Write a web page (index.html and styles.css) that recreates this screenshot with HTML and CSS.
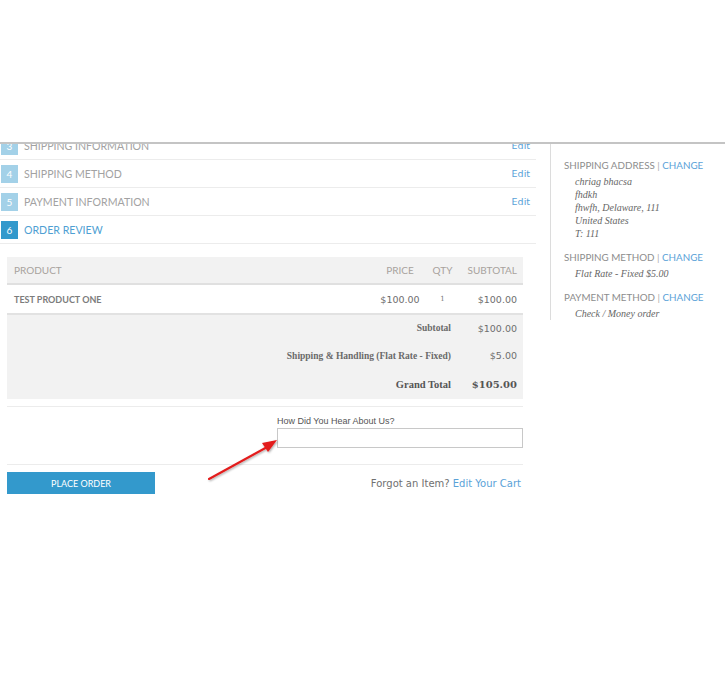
FILE: index.html
```html
<!DOCTYPE html>
<html>
<head>
<meta charset="utf-8">
<link rel="stylesheet" href="styles.css">
</head>
<body>
<div class="top"></div>
<div class="frame">
  <div class="page">
    <div class="main">
      <ol class="steps">
        <li class="step done"><span class="num">3</span><span class="label">Shipping Information</span><a class="edit">Edit</a></li>
        <li class="step done"><span class="num">4</span><span class="label">Shipping Method</span><a class="edit">Edit</a></li>
        <li class="step done"><span class="num">5</span><span class="label">Payment Information</span><a class="edit">Edit</a></li>
        <li class="step active"><span class="num">6</span><span class="label">Order Review</span></li>
      </ol>
      <div class="review">
        <table class="items">
          <thead>
            <tr><th class="c-name">Product</th><th class="c-price">Price</th><th class="c-qty">Qty</th><th class="c-sub">Subtotal</th></tr>
          </thead>
          <tbody>
            <tr><td class="c-name pname">Test Product One</td><td class="c-price num-t">$100.00</td><td class="c-qty qty">1</td><td class="c-sub num-t">$100.00</td></tr>
          </tbody>
          <tfoot>
            <tr class="r1"><td colspan="3" class="t-label">Subtotal</td><td class="c-sub num-t">$100.00</td></tr>
            <tr class="r2"><td colspan="3" class="t-label">Shipping &amp; Handling (Flat Rate - Fixed)</td><td class="c-sub num-t">$5.00</td></tr>
            <tr class="grand"><td colspan="3" class="t-label">Grand Total</td><td class="c-sub">$105.00</td></tr>
          </tfoot>
        </table>
        <div class="survey">
          <label class="survey-label">How Did You Hear About Us?</label>
          <input class="survey-input" type="text">
        </div>
        <div class="actions">
          <button class="place">PLACE ORDER</button>
          <p class="forgot">Forgot an Item? <a class="link">Edit Your Cart</a></p>
        </div>
      </div>
    </div>
    <aside class="side">
      <div class="block billing">
        <h4 class="bh">Billing Address <span class="sep">|</span> <a class="link">Change</a></h4>
        <address class="addr">chriag bhacsa<br>fhdkh<br>fhwfh, Delaware, 111<br>United States<br>T: 111</address>
      </div>
      <div class="block">
        <h4 class="bh">Shipping Address <span class="sep">|</span> <a class="link">Change</a></h4>
        <address class="addr">chriag bhacsa<br>fhdkh<br>fhwfh, Delaware, 111<br>United States<br>T: 111</address>
      </div>
      <div class="block">
        <h4 class="bh">Shipping Method <span class="sep">|</span> <a class="link">Change</a></h4>
        <div class="addr">Flat Rate - Fixed $5.00</div>
      </div>
      <div class="block last">
        <h4 class="bh">Payment Method <span class="sep">|</span> <a class="link">Change</a></h4>
        <div class="addr">Check / Money order</div>
      </div>
    </aside>
  </div>
</div>
<svg class="arrow" width="80" height="50" viewBox="0 0 80 50">
  <defs>
    <filter id="sh" x="-20%" y="-20%" width="140%" height="140%">
      <feDropShadow dx="1" dy="1" stdDeviation="0.8" flood-color="#000" flood-opacity="0.35"/>
    </filter>
  </defs>
  <g filter="url(#sh)">
    <line x1="2" y1="44" x2="62" y2="11" stroke="#e31b1b" stroke-width="2" stroke-linecap="round"/>
    <polygon points="70,5 55,8 61,17" fill="#e31b1b"/>
  </g>
</svg>
</body>
</html>
```
FILE: styles.css
```css
html, body {
  margin: 0;
  padding: 0;
  background: #fff;
}
body {
  position: relative;
  width: 725px;
  height: 680px;
  overflow: hidden;
  font-family: "Lato", "Open Sans", sans-serif;
}
.top {
  height: 142px;
}
.frame {
  border-top: 2px solid #c4c4c4;
  height: 360px;
  overflow: hidden;
}
.page {
  display: flex;
  align-items: flex-start;
  margin-top: -12px;
}
.main {
  width: 536px;
  flex: none;
}
.steps {
  list-style: none;
  margin: 0;
  padding: 0;
}
.step {
  height: 27px;
  border-bottom: 1px solid #ececec;
  display: flex;
  align-items: center;
  padding-left: 1px;
  padding-right: 6px;
}
.num {
  width: 17px;
  height: 18px;
  display: flex;
  align-items: center;
  justify-content: center;
  color: #fff;
  font-size: 10px;
  background: #a3d1e8;
  margin-right: 6px;
}
.step.active .num {
  background: #3399cc;
}
.label {
  flex: 1;
  text-transform: uppercase;
  font-size: 10.6px;
  font-weight: 400;
  color: #a2a2a2;
}
.step.active .label {
  color: #4f9fd3;
}
.edit {
  font-family: "DejaVu Sans", sans-serif;
  font-size: 9.5px;
  color: #5aa2d8;
}
.review {
  padding: 13px 13px 0 7px;
}
.items {
  width: 100%;
  border-collapse: collapse;
}
.items th {
  background: #f2f2f2;
  height: 26px;
  padding: 0;
  font-weight: 400;
  font-size: 10px;
  color: #a8a29d;
  text-transform: uppercase;
  border-bottom: 2px solid #e0e0e0;
}
.items tbody td {
  height: 28px;
  padding: 0;
  border-bottom: 2px solid #e2e2e2;
  background: #fff;
}
.c-name {
  text-align: left;
  padding-left: 7px !important;
}
.c-price {
  width: 48px;
  text-align: center;
}
.c-qty {
  width: 37px;
  text-align: center;
}
.c-sub {
  width: 56px;
  text-align: right;
  padding-right: 6px !important;
}
.pname {
  font-size: 9px;
  font-weight: 700;
  color: #7c7c7c;
  text-transform: uppercase;
}
.num-t {
  font-family: "DejaVu Sans", sans-serif;
  font-size: 9.5px;
  color: #6e6e6e;
}
.qty {
  font-family: "DejaVu Serif", serif;
  font-size: 7px;
  color: #777;
}
.items tfoot td {
  background: #f2f2f2;
  padding: 0;
}
.items tfoot .r1 td {
  height: 26px;
}
.items tfoot .r2 td {
  height: 29px;
}
.items tfoot .grand td {
  height: 29px;
}
.t-label {
  text-align: right;
  padding-right: 10px !important;
  font-family: "Liberation Serif", serif;
  font-size: 9.5px;
  color: #6a6a6a;
  font-weight: 700;
}
.grand td {
  font-family: "Liberation Serif", serif;
  font-weight: 700;
  color: #555;
  font-size: 10.5px;
}
.grand .c-sub {
  font-family: "DejaVu Serif", serif;
  font-size: 10px;
}
.survey {
  margin-top: 7px;
  border-top: 1px solid #ececec;
  border-bottom: 1px solid #ececec;
  padding: 8px 0 16px 270px;
  display: flex;
  flex-direction: column;
}
.survey-label {
  font-family: "Liberation Sans", sans-serif;
  font-size: 9px;
  color: #555;
  height: 12px;
  line-height: 12px;
  margin-bottom: 1px;
}
.survey-input {
  height: 20px;
  box-sizing: border-box;
  border: 1px solid #c8c8c8;
  margin: 0;
  padding: 0;
  background: #fff;
}
.actions {
  display: flex;
  align-items: center;
  justify-content: space-between;
  padding-top: 7px;
}
.place {
  width: 148px;
  height: 22px;
  border: none;
  background: #3399cc;
  color: #fff;
  font-family: "Lato", sans-serif;
  font-size: 9px;
  padding: 0;
}
.forgot {
  margin: 0;
  padding-right: 2px;
  font-family: "DejaVu Sans", sans-serif;
  font-size: 10px;
  color: #707070;
}
.link {
  color: #5aa2d8;
}
.side {
  flex: none;
  margin-left: 14px;
  width: 160px;
  border-left: 1px solid #dcdcdc;
  padding-left: 13px;
  padding-bottom: 0;
}
.block {
  margin-bottom: 9px;
}
.block.last {
  margin-bottom: 0;
}
.billing {
  margin-top: -69px;
  margin-bottom: 11px;
}
.bh {
  margin: 0 0 2px 0;
  height: 16px;
  line-height: 16px;
  font-weight: 400;
  font-size: 9.8px;
  color: #8d8d8d;
  text-transform: uppercase;
  white-space: nowrap;
}
.sep {
  color: #aaa;
}
.addr {
  font-style: italic;
  font-family: "Liberation Serif", serif;
  font-size: 10px;
  line-height: 13px;
  color: #666;
  padding-left: 11px;
}
.arrow {
  position: absolute;
  left: 207px;
  top: 435px;
}
```
